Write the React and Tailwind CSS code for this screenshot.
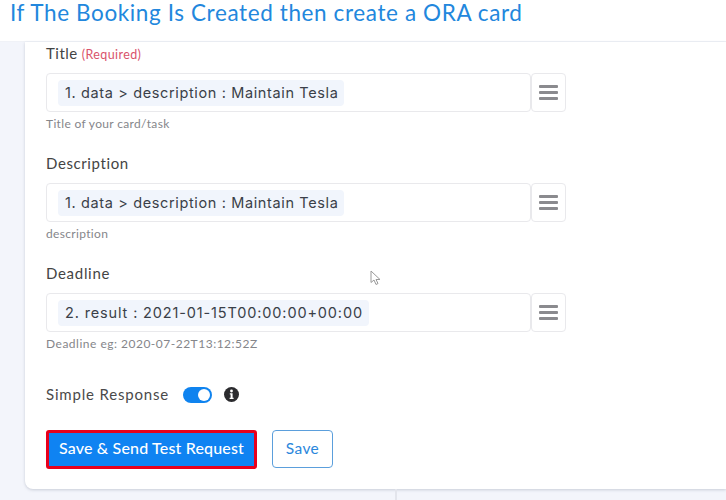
import React from "react";

const sans = "font-['Lato',sans-serif]";

function Menu() {
  return (
    <div className="w-[35px] h-[39px] rounded-[4px] border border-[#e9e9ec] bg-white flex flex-col items-center justify-center gap-[3px]">
      <div className="w-[19px] h-[3px] bg-[#8a8a8e] rounded-[1px]" />
      <div className="w-[19px] h-[3px] bg-[#8a8a8e] rounded-[1px]" />
      <div className="w-[19px] h-[3px] bg-[#8a8a8e] rounded-[1px]" />
    </div>
  );
}

function Field({ label, required, value, help, labelTrack, valueTrack, helpTrack }) {
  return (
    <div className="h-[110px]">
      <div className={`${sans} ${labelTrack} h-[30px] text-[15px] leading-[20px] text-[#444]`}>
        {label}
        {required && <span className="text-[12.5px] text-[#d9536b] ml-[4px] tracking-[0.4px]">(Required)</span>}
      </div>
      <div className="flex">
        <div className="w-[485px] h-[39px] rounded-[4px] border border-[#e9e9ec] bg-white flex items-center pl-[11px]">
          <span className={`font-['Inter',sans-serif] ${valueTrack} h-[26px] pl-[7px] pr-[6px] rounded-[4px] bg-[#f1f5fc] text-[14.5px] leading-[26px] text-[#3a3f48] whitespace-nowrap`}>
            {value}
          </span>
        </div>
        <Menu />
      </div>
      <div className={`${sans} ${helpTrack} mt-[4px] text-[12px] leading-[16px] text-[#85868a]`}>{help}</div>
    </div>
  );
}

export default function App() {
  return (
    <div className="w-[726px] h-[500px] overflow-hidden bg-[#f3f5fb] flex flex-col relative">
      <header className="h-[42px] shrink-0 bg-white border-b border-[#f0f2f7] pl-[10px]">
        <h1 className={`${sans} text-[22.5px] leading-[26px] tracking-[0.61px] text-[#2287dd] whitespace-nowrap`}>
          If The Booking Is Created then create a ORA card
        </h1>
      </header>
      <div className="ml-[25px] h-[447px] shrink-0 bg-white rounded-bl-[8px] shadow-[0_1px_3px_rgba(120,130,150,0.35)] pl-[21px] pt-px">
        <Field label="Title" required labelTrack="tracking-[0.5px]" valueTrack="tracking-[0.63px]" helpTrack="tracking-[0.33px]" value="1. data > description : Maintain Tesla" help="Title of your card/task" />
        <Field label="Description" labelTrack="tracking-[0.6px]" valueTrack="tracking-[0.63px]" helpTrack="tracking-[0.33px]" value="1. data > description : Maintain Tesla" help="description" />
        <Field label="Deadline" labelTrack="tracking-[0.7px]" valueTrack="tracking-[0.86px]" helpTrack="tracking-[0.5px]" value="2. result : 2021-01-15T00:00:00+00:00" help="Deadline eg: 2020-07-22T13:12:52Z" />
        <div className={`${sans} mt-[11px] flex items-center h-[20px] text-[15px] tracking-[0.82px] text-[#4a4a4a]`}>
          <span>Simple Response</span>
          <div className="ml-[14px] mt-[2px] w-[29px] h-[16px] rounded-full bg-[#0f83ef] flex items-center justify-end pr-[2px]">
            <div className="w-[12px] h-[12px] rounded-full bg-white" />
          </div>
          <svg className="ml-[12px]" width="15" height="15" viewBox="0 0 15 15">
            <circle cx="7.5" cy="7.5" r="7.5" fill="#2b2b2e" />
            <circle cx="7.5" cy="4" r="1.4" fill="#fff" />
            <path d="M5.8 6.3h2.8v4.4h1v1.2H5.6v-1.2h1V7.5h-.8z" fill="#fff" />
          </svg>
        </div>
        <div className={`${sans} mt-[26px] flex items-start gap-[15px]`}>
          <button className="w-[211px] h-[39px] pb-[3px] rounded-[3px] border-[3px] border-[#e8001c] bg-[#0f83f2] text-white text-[16px] font-medium tracking-[0.17px] whitespace-nowrap">
            Save &amp; Send Test Request
          </button>
          <button className="w-[61px] h-[38px] rounded-[4px] border border-[#5b9fdc] bg-white text-[#2b87dc] text-[15.5px] tracking-[0.4px]">
            Save
          </button>
        </div>
      </div>
      <div className="flex-1 ml-[395px] w-[2px] border-l-2 border-[#e3e5ec]" />
      <svg className="absolute left-[370px] top-[270px]" width="11" height="16" viewBox="0 0 11 16">
        <path d="M1 1v11.5l3-2.5 2 4.5 2-1-2-4h4z" fill="#fff" stroke="#9a9a9a" strokeWidth="1" />
      </svg>
    </div>
  );
}
